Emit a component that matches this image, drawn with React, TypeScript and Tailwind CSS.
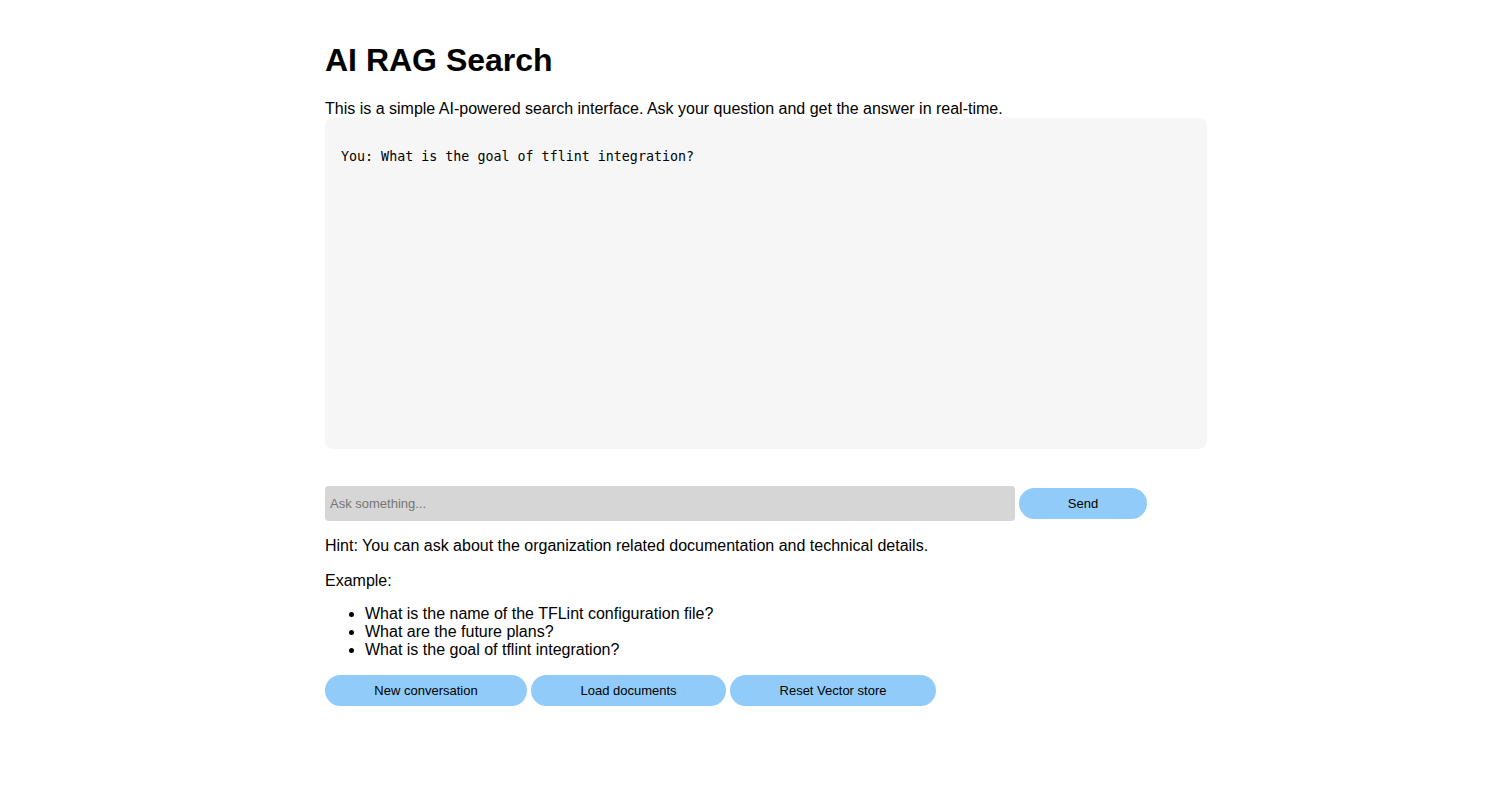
export default function App() {
  const sans = { fontFamily: '"Liberation Sans", Arial, sans-serif' };
  return (
    <div className="min-h-[801px] bg-white text-black" style={sans}>
      <div className="ml-[325px] w-[882px] pt-[42px]">
        <h1 className="text-[32px] font-bold leading-[37px]" style={{ fontFamily: '"Liberation Sans", Arial, sans-serif' }}>AI RAG Search</h1>
        <p className="mt-[21px] text-[16px] leading-[18px]">
          This is a simple AI-powered search interface. Ask your question and get the answer in real-time.
        </p>
        <div className="h-[331px] rounded-[8px] bg-[#f6f6f6] px-4 pt-[31px]">
          <pre className="text-[13.33px] leading-[16px] text-black" style={{ fontFamily: '"DejaVu Sans Mono", "Liberation Mono", monospace' }}>
            You: What is the goal of tflint integration?
          </pre>
        </div>
        <div className="mt-[37px] flex items-center">
          <input
            type="text"
            placeholder="Ask something..."
            className="h-[35px] w-[690px] rounded-[4px] bg-[#d6d6d6] px-[5px] text-[13px] text-black outline-none placeholder:text-[#757575]"
            style={sans}
          />
          <button className="ml-[4px] h-[31px] w-[128px] rounded-full bg-[#90cbf9] text-[13px] text-black">Send</button>
        </div>
        <p className="mt-[16px] text-[16px] leading-[18px]">
          Hint: You can ask about the organization related documentation and technical details.
        </p>
        <p className="mt-[17px] text-[16px] leading-[18px]">Example:</p>
        <ul className="mt-[15px] list-disc pl-[40px] text-[16px] leading-[18px]">
          <li>What is the name of the TFLint configuration file?</li>
          <li>What are the future plans?</li>
          <li>What is the goal of tflint integration?</li>
        </ul>
        <div className="mt-[16px] flex gap-[4px]">
          <button className="h-[31px] w-[202px] rounded-full bg-[#90cbf9] text-[13px] text-black">New conversation</button>
          <button className="h-[31px] w-[195px] rounded-full bg-[#90cbf9] text-[13px] text-black">Load documents</button>
          <button className="h-[31px] w-[206px] rounded-full bg-[#90cbf9] text-[13px] text-black">Reset Vector store</button>
        </div>
      </div>
    </div>
  );
}
